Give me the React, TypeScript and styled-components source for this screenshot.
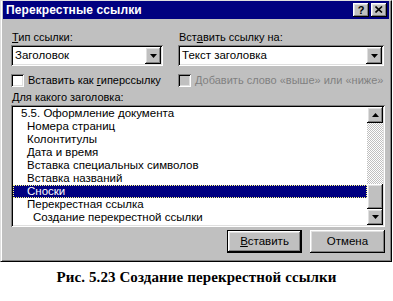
import React from "react";
import styled, { createGlobalStyle, css } from "styled-components";

const Global = createGlobalStyle`
  html, body { margin: 0; padding: 0; background: #ffffff; }
  #root { width: 393px; }
`;

const raised = css`
  box-shadow: inset -1px -1px #000000, inset 1px 1px #ffffff,
    inset -2px -2px #808080, inset 2px 2px #dfdfdf;
`;

const sunken = css`
  box-shadow: inset 1px 1px #808080, inset -1px -1px #ffffff,
    inset 2px 2px #000000, inset -2px -2px #dfdfdf;
`;

const uiFont = css`
  font-family: "Liberation Sans", Arial, sans-serif;
  font-size: 11px;
  line-height: 13px;
  color: #000000;
`;

const Page = styled.div`
  width: 393px;
  display: flex;
  flex-direction: column;
`;

const Dialog = styled.div`
  width: 392px;
  height: 262px;
  box-sizing: border-box;
  background: #c0c0c0;
  border-left: 1px solid #dfdfdf;
  border-top: 1px solid #dfdfdf;
  border-right: 1px solid #000000;
  border-bottom: 1px solid #000000;
  box-shadow: inset 1px 0 #ffffff, inset -1px -1px #808080;
  padding: 0 2px 2px 2px;
  display: flex;
  flex-direction: column;
`;

const TitleBar = styled.div`
  height: 18px;
  background: #000080;
  display: flex;
  align-items: center;
  justify-content: space-between;
  padding: 0 2px 0 3px;
`;

const TitleText = styled.span`
  font-family: "Liberation Sans", Arial, sans-serif;
  font-weight: bold;
  font-size: 12px;
  color: #ffffff;
  letter-spacing: 0.1px;
`;

const TitleButtons = styled.div`
  display: flex;
  gap: 2px;
`;

const TitleButton = styled.div`
  width: 16px;
  height: 14px;
  background: #c0c0c0;
  ${raised};
  display: flex;
  align-items: center;
  justify-content: center;
  font-family: "Liberation Sans", Arial, sans-serif;
  font-weight: bold;
  font-size: 11px;
  color: #000000;
  padding-bottom: 1px;
  box-sizing: border-box;
`;

const Body = styled.div`
  flex: 1;
  display: flex;
  flex-direction: column;
  padding: 12px 4px 0 8px;
`;

const TopGrid = styled.div`
  display: grid;
  grid-template-columns: 152px 206px;
  column-gap: 15px;
`;

const Field = styled.div`
  display: flex;
  flex-direction: column;
  gap: 1px;
`;

const Label = styled.div`
  ${uiFont};
  padding-left: 1px;
  white-space: nowrap;
`;

const U = styled.span`
  text-decoration: underline;
  text-underline-offset: 1px;
`;

const Combo = styled.div`
  height: 21px;
  box-sizing: border-box;
  background: #ffffff;
  ${sunken};
  padding: 2px;
  display: flex;
  align-items: center;
`;

const ComboValue = styled.div`
  ${uiFont};
  font-size: 11.5px;
  flex: 1;
  padding-left: 2px;
  white-space: nowrap;
  overflow: hidden;
`;

const DropButton = styled.div`
  width: 16px;
  height: 17px;
  box-sizing: border-box;
  background: #c0c0c0;
  ${raised};
  display: flex;
  align-items: center;
  justify-content: center;
`;

const CheckRow = styled.div<{ $disabled?: boolean }>`
  display: flex;
  align-items: center;
  gap: 4px;
  margin-top: 8px;
  ${uiFont};
  color: ${(p) => (p.$disabled ? "#808080" : "#000000")};
  white-space: nowrap;
`;

const CheckBox = styled.div<{ $disabled?: boolean }>`
  width: 13px;
  height: 13px;
  box-sizing: border-box;
  flex: none;
  background: ${(p) => (p.$disabled ? "#c0c0c0" : "#ffffff")};
  ${sunken};
`;

const ListLabel = styled(Label)`
  margin-top: 4px;
`;

const ListBox = styled.div`
  margin-top: 1px;
  width: 374px;
  height: 122px;
  box-sizing: border-box;
  background: #ffffff;
  ${sunken};
  padding: 2px;
  display: flex;
  overflow: hidden;
`;

const Items = styled.div`
  flex: 1;
  display: flex;
  flex-direction: column;
  overflow: hidden;
`;

const Item = styled.div<{ $level: number; $selected?: boolean }>`
  ${uiFont};
  font-size: 11.5px;
  height: 13px;
  flex: none;
  white-space: nowrap;
  padding-left: ${(p) => 8 + p.$level * 6}px;
  background: ${(p) => (p.$selected ? "#000080" : "transparent")};
  color: ${(p) => (p.$selected ? "#ffffff" : "#000000")};
  outline: ${(p) => (p.$selected ? "1px dotted #ffff80" : "none")};
  outline-offset: -1px;
`;

const Scrollbar = styled.div`
  width: 16px;
  display: flex;
  flex-direction: column;
`;

const ScrollButton = styled.div`
  width: 16px;
  height: 16px;
  flex: none;
  box-sizing: border-box;
  background: #c0c0c0;
  ${raised};
  display: flex;
  align-items: center;
  justify-content: center;
`;

const Track = styled.div`
  flex: 1;
  background-color: #c0c0c0;
  background-image: conic-gradient(
    #ffffff 25%,
    #c0c0c0 0 50%,
    #ffffff 0 75%,
    #c0c0c0 0
  );
  background-size: 2px 2px;
  display: flex;
  flex-direction: column;
  justify-content: flex-end;
`;

const Thumb = styled.div`
  height: 25px;
  background: #c0c0c0;
  ${raised};
`;

const ButtonRow = styled.div`
  display: flex;
  justify-content: flex-end;
  gap: 8px;
  margin-top: 3px;
`;

const PushButton = styled.div<{ $default?: boolean }>`
  width: 75px;
  height: 23px;
  box-sizing: border-box;
  background: #c0c0c0;
  ${uiFont};
  font-size: 11.5px;
  display: flex;
  align-items: center;
  justify-content: center;
  ${(p) =>
    p.$default
      ? css`
          border: 1px solid #000000;
          ${raised};
        `
      : raised};
`;

const Caption = styled.div`
  margin-top: 6px;
  text-align: center;
  font-family: "Liberation Serif", "Times New Roman", "DejaVu Serif", serif;
  font-weight: bold;
  font-size: 15px;
  line-height: 18px;
  color: #000000;
  letter-spacing: 0.1px;
`;

const DownArrow = () => (
  <svg width="7" height="4" viewBox="0 0 7 4">
    <path d="M0 0h7L3.5 4z" fill="#000" />
  </svg>
);

const UpArrow = () => (
  <svg width="7" height="4" viewBox="0 0 7 4">
    <path d="M0 4h7L3.5 0z" fill="#000" />
  </svg>
);

const CloseGlyph = () => (
  <svg width="8" height="7" viewBox="0 0 8 7">
    <path d="M0.5 0.5L7 6.5M7 0.5L0.5 6.5" stroke="#000" strokeWidth="1.6" />
  </svg>
);

const items: { text: string; level: number; selected?: boolean }[] = [
  { text: "5.5. Оформление документа", level: 0 },
  { text: "Номера страниц", level: 1 },
  { text: "Колонтитулы", level: 1 },
  { text: "Дата и время", level: 1 },
  { text: "Вставка специальных символов", level: 1 },
  { text: "Вставка названий", level: 1 },
  { text: "Сноски", level: 1, selected: true },
  { text: "Перекрестная ссылка", level: 1 },
  { text: "Создание перекрестной ссылки", level: 2 },
];

export default function App() {
  return (
    <Page>
      <Global />
      <Dialog>
        <TitleBar>
          <TitleText>Перекрестные ссылки</TitleText>
          <TitleButtons>
            <TitleButton>?</TitleButton>
            <TitleButton>
              <CloseGlyph />
            </TitleButton>
          </TitleButtons>
        </TitleBar>
        <Body>
          <TopGrid>
            <Field>
              <Label>
                <U>Т</U>ип ссылки:
              </Label>
              <Combo>
                <ComboValue>Заголовок</ComboValue>
                <DropButton>
                  <DownArrow />
                </DropButton>
              </Combo>
            </Field>
            <Field>
              <Label>
                Вст<U>а</U>вить ссылку на:
              </Label>
              <Combo>
                <ComboValue>Текст заголовка</ComboValue>
                <DropButton>
                  <DownArrow />
                </DropButton>
              </Combo>
            </Field>
            <CheckRow>
              <CheckBox />
              <span>
                Вставить как <U>г</U>иперссылку
              </span>
            </CheckRow>
            <CheckRow $disabled>
              <CheckBox $disabled />
              <span>Добавить слово «выше» или «ниже»</span>
            </CheckRow>
          </TopGrid>
          <ListLabel>
            <U>Д</U>ля какого заголовка:
          </ListLabel>
          <ListBox>
            <Items>
              {items.map((it) => (
                <Item key={it.text} $level={it.level} $selected={it.selected}>
                  {it.text}
                </Item>
              ))}
            </Items>
            <Scrollbar>
              <ScrollButton>
                <UpArrow />
              </ScrollButton>
              <Track>
                <Thumb />
              </Track>
              <ScrollButton>
                <DownArrow />
              </ScrollButton>
            </Scrollbar>
          </ListBox>
          <ButtonRow>
            <PushButton $default>
              <span>
                <U>В</U>ставить
              </span>
            </PushButton>
            <PushButton>Отмена</PushButton>
          </ButtonRow>
        </Body>
      </Dialog>
      <Caption>Рис. 5.23 Создание перекрестной ссылки</Caption>
    </Page>
  );
}
